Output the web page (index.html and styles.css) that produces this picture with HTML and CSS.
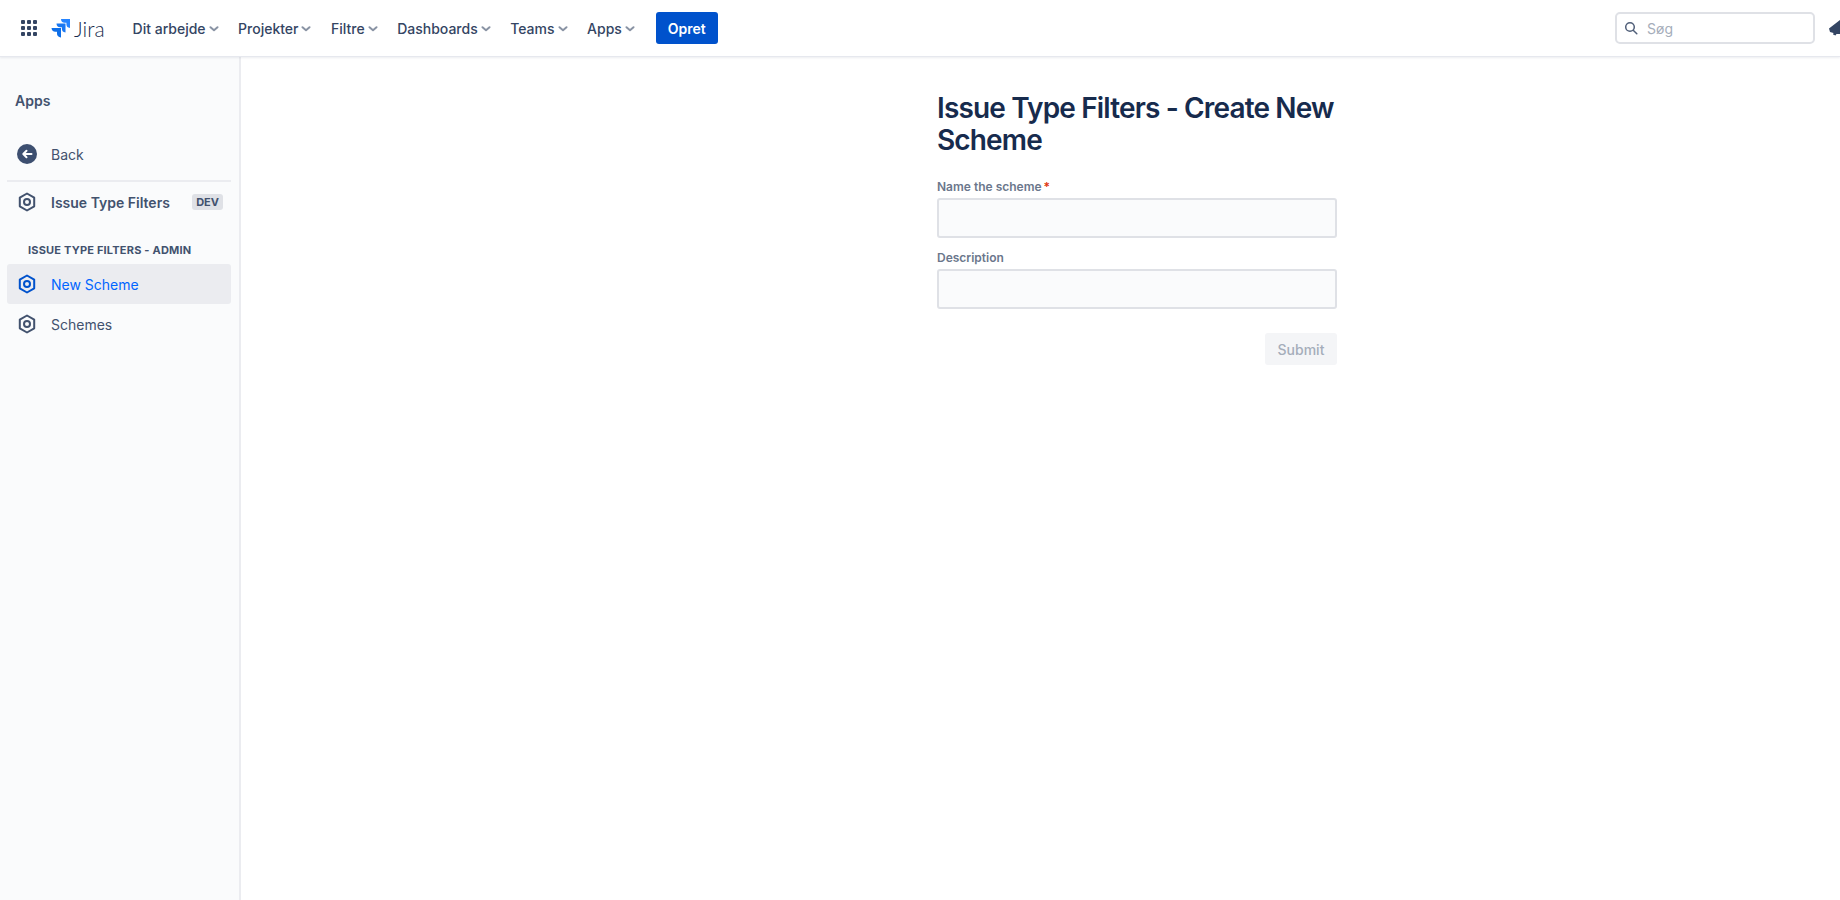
FILE: index.html
```html
<!DOCTYPE html>
<html lang="da">
<head>
<meta charset="utf-8">
<title>Issue Type Filters - Create New Scheme</title>
<link rel="stylesheet" href="styles.css">
</head>
<body>
<header class="topbar">
  <svg class="apps-grid" width="18" height="18" viewBox="0 0 18 18" fill="#344563"><rect x="1" y="1" width="4" height="4" rx="1"/><rect x="7" y="1" width="4" height="4" rx="1"/><rect x="13" y="1" width="4" height="4" rx="1"/><rect x="1" y="7" width="4" height="4" rx="1"/><rect x="7" y="7" width="4" height="4" rx="1"/><rect x="13" y="7" width="4" height="4" rx="1"/><rect x="1" y="13" width="4" height="4" rx="1"/><rect x="7" y="13" width="4" height="4" rx="1"/><rect x="13" y="13" width="4" height="4" rx="1"/></svg>
  <div class="logo">
    <svg width="19" height="19" viewBox="0 0 19 19"><path fill="#2684ff" d="M19 0h-9a3.700 3.700 0 0 0 3.700 3.700h1.700v1.600a3.700 3.700 0 0 0 3.600 3.600z"/><path fill="#1a78f2" d="M14.500 4.500H5.500a3.700 3.700 0 0 0 3.700 3.700h1.700v1.600a3.700 3.700 0 0 0 3.600 3.600z"/><path fill="#0f6fe8" d="M10 9H0.500a4 4 0 0 0 4 3.700H6v1.700A3.800 3.800 0 0 0 10 18.500z"/></svg>
    <span class="logo-word">Jira</span>
  </div>
  <nav class="nav">
    <a class="nav-item">Dit arbejde<svg class="chev" width="10" height="6" viewBox="0 0 10 6"><path d="M1.500 1.200L5 4.200l3.500-3" fill="none" stroke="#8993a4" stroke-width="2" stroke-linecap="round" stroke-linejoin="round"/></svg></a>
    <a class="nav-item">Projekter<svg class="chev" width="10" height="6" viewBox="0 0 10 6"><path d="M1.500 1.200L5 4.200l3.500-3" fill="none" stroke="#8993a4" stroke-width="2" stroke-linecap="round" stroke-linejoin="round"/></svg></a>
    <a class="nav-item">Filtre<svg class="chev" width="10" height="6" viewBox="0 0 10 6"><path d="M1.500 1.200L5 4.200l3.500-3" fill="none" stroke="#8993a4" stroke-width="2" stroke-linecap="round" stroke-linejoin="round"/></svg></a>
    <a class="nav-item">Dashboards<svg class="chev" width="10" height="6" viewBox="0 0 10 6"><path d="M1.500 1.200L5 4.200l3.500-3" fill="none" stroke="#8993a4" stroke-width="2" stroke-linecap="round" stroke-linejoin="round"/></svg></a>
    <a class="nav-item">Teams<svg class="chev" width="10" height="6" viewBox="0 0 10 6"><path d="M1.500 1.200L5 4.200l3.500-3" fill="none" stroke="#8993a4" stroke-width="2" stroke-linecap="round" stroke-linejoin="round"/></svg></a>
    <a class="nav-item">Apps<svg class="chev" width="10" height="6" viewBox="0 0 10 6"><path d="M1.500 1.200L5 4.200l3.500-3" fill="none" stroke="#8993a4" stroke-width="2" stroke-linecap="round" stroke-linejoin="round"/></svg></a>
  </nav>
  <button class="create">Opret</button>
  <div class="search">
    <svg width="14" height="14" viewBox="0 0 14 14"><circle cx="6" cy="6" r="4.300" fill="none" stroke="#505f79" stroke-width="1.500"/><path d="M9.200 9.200L12.800 12.800" stroke="#505f79" stroke-width="1.500" stroke-linecap="round"/></svg>
    <span class="search-text">Søg</span>
  </div>
  <svg class="bell" width="16" height="16" viewBox="0 0 16 16" fill="#344563"><path d="M0 8.500L11 0h5v14H7.500L6.500 15.500 4 14.500l.5-1.500L1 12z"/></svg>
</header>
<div class="shell">
  <aside class="sidebar">
    <div class="side-title">Apps</div>
    <div class="side-row back-row">
      <svg width="20" height="20" viewBox="0 0 20 20"><circle cx="10" cy="10" r="10" fill="#3d4f70"/><path d="M14.500 10H6.500M9.500 6.800L6.300 10l3.200 3.200" fill="none" stroke="#fff" stroke-width="2" stroke-linecap="round" stroke-linejoin="round"/></svg>
      <span>Back</span>
    </div>
    <div class="separator"></div>
    <div class="side-row app-row">
      <svg class="hex" width="18" height="20" viewBox="0 0 18 20"><path d="M9 1.500l7.200 4.200v8.600L9 18.500l-7.200-4.200V5.700z" fill="none" stroke="currentColor" stroke-width="2" stroke-linejoin="round"/><circle cx="9" cy="10" r="3" fill="none" stroke="currentColor" stroke-width="2"/></svg>
      <span class="app-name">Issue Type Filters</span>
      <span class="badge">DEV</span>
    </div>
    <div class="section-label">ISSUE TYPE FILTERS - ADMIN</div>
    <div class="side-row active">
      <svg class="hex" width="18" height="20" viewBox="0 0 18 20"><path d="M9 1.500l7.200 4.200v8.600L9 18.500l-7.200-4.200V5.700z" fill="none" stroke="currentColor" stroke-width="2" stroke-linejoin="round"/><circle cx="9" cy="10" r="3" fill="none" stroke="currentColor" stroke-width="2"/></svg>
      <span>New Scheme</span>
    </div>
    <div class="side-row">
      <svg class="hex" width="18" height="20" viewBox="0 0 18 20"><path d="M9 1.500l7.200 4.200v8.600L9 18.500l-7.200-4.200V5.700z" fill="none" stroke="currentColor" stroke-width="2" stroke-linejoin="round"/><circle cx="9" cy="10" r="3" fill="none" stroke="currentColor" stroke-width="2"/></svg>
      <span>Schemes</span>
    </div>
  </aside>
  <main class="main">
    <form class="form">
      <h1 class="title">Issue Type Filters - Create New Scheme</h1>
      <label class="field-label first">Name the scheme<span class="req">*</span></label>
      <input class="field" type="text">
      <label class="field-label">Description</label>
      <input class="field" type="text">
      <div class="actions"><button class="submit" type="button" disabled>Submit</button></div>
    </form>
  </main>
</div>
</body>
</html>
```
FILE: styles.css
```css
* { box-sizing: border-box; }
html, body { margin: 0; height: 100%; overflow: hidden; }
body {
  font-family: Inter, "Liberation Sans", sans-serif;
  color: #344563;
  background: #fff;
  display: flex;
  flex-direction: column;
}
.topbar {
  height: 57px;
  flex: none;
  display: flex;
  align-items: center;
  padding: 0 0 0 20px;
  background: #fff;
  border-bottom: 1px solid #e6e8ee;
  box-shadow: 0 1px 2px rgba(9, 30, 66, 0.08);
  overflow: hidden;
  position: relative;
  z-index: 1;
}
.apps-grid { flex: none; }
.logo { display: flex; align-items: center; margin-left: 13px; gap: 4px; flex: none; }
.logo-word { font-size: 21px; font-weight: 300; color: #172b4d; font-family: Lato, Inter, sans-serif; }
.nav { display: flex; margin-left: 28px; gap: 19.5px; }
.nav-item {
  display: flex;
  align-items: center;
  gap: 3px;
  font-size: 14px;
  font-weight: 500;
  color: #344563;
  white-space: nowrap;
}
.chev { flex: none; margin-top: 1px; }
.create {
  margin-left: 21px;
  width: 62px;
  height: 32px;
  border: 0;
  border-radius: 3px;
  background: #0052cc;
  color: #fff;
  font: 600 14px Inter, sans-serif;
  padding: 0;
}
.search {
  margin-left: auto;
  width: 200px;
  height: 32px;
  border: 2px solid #dfe1e6;
  border-radius: 5px;
  display: flex;
  align-items: center;
  padding-left: 7px;
  gap: 9px;
  flex: none;
}
.search-text { font-size: 14px; color: #a5adba; }
.bell { flex: none; margin-left: 14px; margin-right: -5px; }
.shell { flex: 1; display: flex; min-height: 0; }
.sidebar {
  width: 241px;
  flex: none;
  background: #fafbfc;
  border-right: 2px solid #ebecf0;
  padding: 35px 8px 0 7px;
}
.side-title { font-size: 14px; font-weight: 600; color: #42526e; padding-left: 8px; line-height: 18px; }
.side-row {
  height: 40px;
  display: flex;
  align-items: center;
  padding-left: 11px;
  gap: 15px;
  font-size: 14px;
  color: #42526e;
  border-radius: 3px;
}
.side-row .hex { flex: none; color: #42526e; }
.back-row { margin-top: 24px; padding-left: 10px; gap: 14px; }
.separator { height: 2px; background: #ebecf0; margin-top: 6px; }
.app-name { font-weight: 600; }
.badge {
  margin-left: auto;
  margin-right: 8px;
  background: #dfe1e6;
  border-radius: 3px;
  font-size: 11px;
  font-weight: 700;
  line-height: 16px;
  padding: 0 4px;
  color: #42526e;
}
.section-label {
  margin-top: 20px;
  padding-left: 21px;
  font-size: 11px;
  font-weight: 700;
  line-height: 16px;
  color: #42526e;
  letter-spacing: 0.2px;
  margin-bottom: 6px;
}
.active { background: #ebecf0; color: #0052cc; }
.active span { color: #0065ff; }
.side-row.active .hex { color: #0052cc; }
.main { flex: 1; padding: 35px 0 0 696px; background: #fff; }
.form { width: 400px; }
.title {
  margin: 0;
  font-size: 28px;
  font-weight: 600;
  line-height: 32px;
  letter-spacing: -0.85px;
  color: #172b4d;
}
.field-label {
  display: block;
  margin-top: 12px;
  font-size: 12px;
  font-weight: 600;
  line-height: 16px;
  color: #6b778c;
}
.field-label.first { margin-top: 23px; }
.req { color: #de350b; margin-left: 2px; }
.field {
  display: block;
  width: 100%;
  height: 40px;
  margin-top: 3px;
  border: 2px solid #dfe1e6;
  border-radius: 3px;
  background: #fafbfc;
}
.actions { display: flex; justify-content: flex-end; margin-top: 24px; }
.submit {
  width: 72px;
  height: 32px;
  border: 0;
  border-radius: 3px;
  background: #f4f5f7;
  color: #a5adba;
  font: 500 14px Inter, sans-serif;
  padding: 0;
}
```
